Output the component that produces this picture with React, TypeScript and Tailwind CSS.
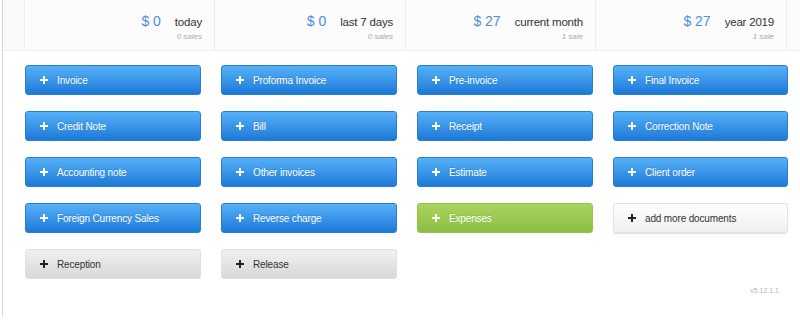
import React from "react";

type Btn = { label: string; kind: "blue" | "green" | "white" | "gray" };

const buttons: Btn[] = [
  { label: "Invoice", kind: "blue" },
  { label: "Proforma Invoice", kind: "blue" },
  { label: "Pre-invoice", kind: "blue" },
  { label: "Final Invoice", kind: "blue" },
  { label: "Credit Note", kind: "blue" },
  { label: "Bill", kind: "blue" },
  { label: "Receipt", kind: "blue" },
  { label: "Correction Note", kind: "blue" },
  { label: "Accounting note", kind: "blue" },
  { label: "Other invoices", kind: "blue" },
  { label: "Estimate", kind: "blue" },
  { label: "Client order", kind: "blue" },
  { label: "Foreign Currency Sales", kind: "blue" },
  { label: "Reverse charge", kind: "blue" },
  { label: "Expenses", kind: "green" },
  { label: "add more documents", kind: "white" },
  { label: "Reception", kind: "gray" },
  { label: "Release", kind: "gray" },
];

const stats = [
  { amount: "$ 0", label: "today", sub: "0 sales", w: "w-[190px]" },
  { amount: "$ 0", label: "last 7 days", sub: "0 sales", w: "w-[191px]" },
  { amount: "$ 27", label: "current month", sub: "1 sale", w: "w-[190px]" },
  { amount: "$ 27", label: "year 2019", sub: "1 sale", w: "w-[191px]" },
];

function Plus({ color }: { color: string }) {
  return (
    <svg width="8" height="8" viewBox="0 0 8 8" className="shrink-0">
      <rect x="3" y="0" width="2" height="8" fill={color} />
      <rect x="0" y="3" width="8" height="2" fill={color} />
    </svg>
  );
}

function DocButton({ b }: { b: Btn }) {
  const cls =
    b.kind === "blue"
      ? "bg-gradient-to-b from-[#56b1f8] to-[#1b79d8] border-[#2a7fd2] text-white [text-shadow:0_-1px_0_rgba(0,0,0,0.15)]"
      : b.kind === "green"
      ? "bg-gradient-to-b from-[#abd35f] to-[#8abf43] border-[#93c44e] text-white [text-shadow:0_-1px_0_rgba(0,0,0,0.1)]"
      : b.kind === "white"
      ? "bg-gradient-to-b from-[#ffffff] to-[#f0f0f0] border-[#e2e2e2] text-[#333] shadow-[0_1px_1px_rgba(0,0,0,0.12)]"
      : "bg-gradient-to-b from-[#f1f1f1] to-[#d8d8d8] border-[#e0e0e0] text-[#333]";
  const plus = b.kind === "blue" || b.kind === "green" ? "#ffffff" : "#222222";
  return (
    <div
      className={`h-[30px] rounded-[3px] border flex items-center pl-[14px] gap-[9px] text-[10px] tracking-[-0.15px] ${cls}`}
    >
      <Plus color={plus} />
      <span>{b.label}</span>
    </div>
  );
}

export default function App() {
  return (
    <div
      className="w-[800px] h-[331px] bg-white overflow-hidden pl-[2px]"
      style={{ fontFamily: '"Liberation Sans", Arial, Helvetica, sans-serif' }}
    >
      <div className="h-[317px] border-l border-[#d6d6d6] relative">
        {/* header */}
        <div className="h-[51px] flex bg-[#fcfcfc] border-b border-[#eeeeee]">
          <div className="w-[22px] shrink-0 border-r border-[#f0f0f0] bg-[#fafafa]" />
          {stats.map((s, i) => (
            <div
              key={i}
              className={`${s.w} shrink-0 border-r border-[#ececec] flex flex-col items-end pr-[12px] pt-[14px]`}
            >
              <div className="flex items-baseline leading-none">
                <span className="text-[14px] text-[#4a8fd8] mr-[14px]">{s.amount}</span>
                <span className="text-[11.5px] tracking-[-0.2px] text-[#333]">{s.label}</span>
              </div>
              <span className="text-[8px] italic leading-none text-[#aaaaaa] mt-[4px]">{s.sub}</span>
            </div>
          ))}
          <div className="flex-1" />
        </div>
        {/* buttons */}
        <div className="grid grid-cols-[176px_176px_176px_175px] gap-x-[20px] gap-y-[16px] ml-[22px] mt-[14px]">
          {buttons.map((b, i) => (
            <DocButton key={i} b={b} />
          ))}
        </div>
        <div className="absolute right-[21px] top-[286px] text-[7px] text-[#b5b5b5]">v5.12.1.1</div>
      </div>
    </div>
  );
}
